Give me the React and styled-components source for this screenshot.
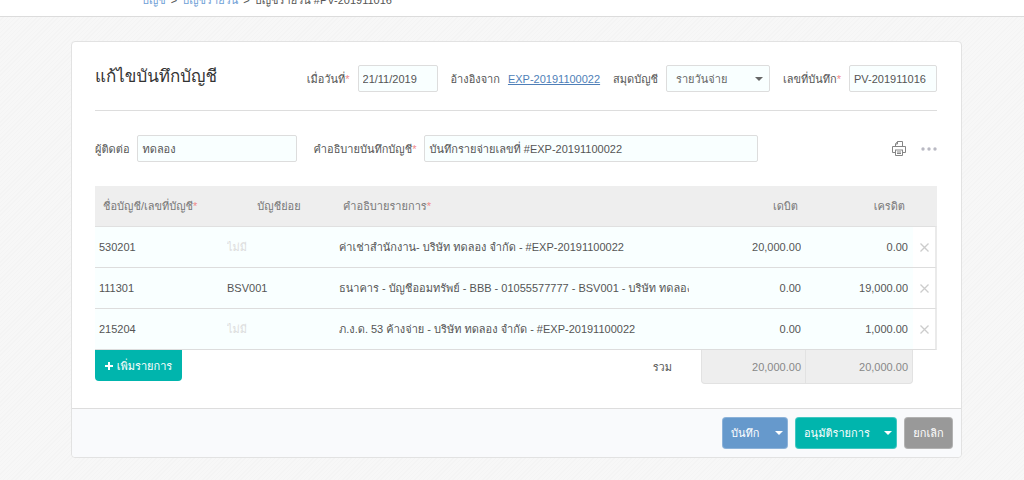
import React from "react";
import styled, { createGlobalStyle } from "styled-components";

const GlobalStyle = createGlobalStyle`
  * { box-sizing: border-box; }
  body {
    margin: 0;
    min-height: 100vh;
    color: #555;
    font: 11px/16px "Liberation Sans", Loma, sans-serif;
    background:
      repeating-linear-gradient(135deg, transparent 0 2px, #f4f4f4 2px 3px),
      #f7f7f7;
  }
  input, button, select { font: inherit; color: inherit; margin: 0; }
`;

const Breadcrumb = styled.nav`
  display: flex;
  align-items: flex-end;
  gap: 5px;
  height: 17px;
  padding: 0 142px 8px;
  overflow: hidden;
  white-space: nowrap;
  background: #fff;
  border-bottom: 1px solid #dcdcdc;
`;

const Crumb = styled.a`
  color: #6fa0d6;
  text-decoration: none;
`;

const Main = styled.main`
  padding: 24px 62px 22px 71px;
`;

const Card = styled.form`
  background: #fff;
  border: 1px solid #e2e2e2;
  border-radius: 4px;
`;

const CardBody = styled.div`
  padding: 23px 24px 24px 23px;
`;

const TitleRow = styled.div`
  display: flex;
  align-items: flex-start;
  justify-content: space-between;
  padding-bottom: 18px;
  border-bottom: 1px solid #ddd;
`;

const Title = styled.h1`
  margin: 0;
  color: #333;
  font-size: 17px;
  line-height: 24px;
  font-weight: 400;
  white-space: nowrap;
`;

const FieldGroup = styled.div`
  display: flex;
  align-items: center;
  gap: ${(p) => p.$gap}px;
`;

const Field = styled.div`
  display: flex;
  align-items: center;
  gap: 8px;
  white-space: nowrap;
`;

const RequiredLabel = styled.label`
  &::after {
    content: "${(p) => (p.$required ? "*" : "")}";
    color: #f08a8a;
  }
`;

const TextBox = styled.input`
  width: ${(p) => p.$width}px;
  height: 27px;
  padding: 0 4px;
  background: #f9ffff;
  border: 1px solid #ddd;
  border-radius: 2px;
`;

const RefLink = styled.a`
  color: #4f7fb8;
`;

const SelectWrap = styled.div`
  display: grid;
  grid-template-columns: 1fr;
  align-items: center;
  color: #666;
  > * { grid-area: 1 / 1; }
`;

const Select = styled.select`
  appearance: none;
  width: 104px;
  height: 27px;
  padding: 0 24px 0 9px;
  background: #f9ffff;
  border: 1px solid #ddd;
  border-radius: 2px;
`;

const Caret = styled.span`
  justify-self: end;
  margin-right: ${(p) => p.$inset || 0}px;
  border: 4px solid transparent;
  border-top-color: currentColor;
  border-bottom: 0;
  pointer-events: none;
`;

const DetailRow = styled.div`
  display: flex;
  align-items: center;
  justify-content: space-between;
  padding: 24px 0;
`;

const Tools = styled.div`
  display: flex;
  align-items: center;
  gap: 15px;
`;

const IconButton = styled.button`
  display: flex;
  padding: 0;
  color: ${(p) => p.$color || "#858585"};
  background: none;
  border: 0;
`;

const Table = styled.table`
  width: 100%;
  table-layout: fixed;
  border-collapse: separate;
  border-spacing: 0;
`;

const HeadCell = styled.th`
  height: 40px;
  padding: 0 8px;
  color: #777;
  background: #eee;
  font-weight: 400;
  text-align: ${(p) => p.$align || "left"};
  white-space: nowrap;
  &::after {
    content: "${(p) => (p.$required ? "*" : "")}";
    color: #f08a8a;
  }
`;

const Cell = styled.td`
  height: 41px;
  padding: 0 5px 0 4px;
  background: #f9ffff;
  border-bottom: 1px solid #ddd;
  tr:first-child > & {
    height: 42px;
    border-top: 1px solid #e0e0e0;
  }
`;

const DetailCell = styled(Cell)`
  padding-right: 12px;
`;

const RemoveCell = styled(Cell)`
  padding: 0 5px 0 7px;
  background: #fff;
  border-right: 2px solid #eaeaea;
`;

const CellInput = styled.input`
  display: block;
  width: 100%;
  height: 24px;
  padding: 0;
  background: transparent;
  border: 0;
  text-align: ${(p) => p.$align || "left"};
  &::placeholder { color: #ddd; opacity: 1; }
`;

const FootCell = styled.td`
  padding: 0;
  padding-right: ${(p) => p.$pad || 0}px;
  text-align: ${(p) => p.$align || "left"};
`;

const SumCell = styled.td`
  height: 34px;
  padding: 0 4px;
  color: #888;
  background: #eee;
  border: solid #e2e2e2;
  border-width: ${(p) => (p.$last ? "0 1px 1px 0" : "0 1px 1px 1px")};
  border-radius: ${(p) => (p.$last ? "0 0 4px 0" : "0 0 0 4px")};
  text-align: right;
`;

const AddButton = styled.button`
  display: flex;
  align-items: center;
  justify-content: center;
  gap: 4px;
  width: 87px;
  height: 31px;
  margin-bottom: 3px;
  padding: 0;
  color: #fff;
  background: #00b5ad;
  border: 0;
  border-radius: 0 0 4px 4px;
  white-space: nowrap;
`;

const Footer = styled.footer`
  display: flex;
  justify-content: flex-end;
  gap: 7px;
  padding: 8px;
  background: #f9fafc;
  border-top: 1px solid #ddd;
  border-radius: 0 0 4px 4px;
`;

const ActionButton = styled.button`
  display: flex;
  align-items: center;
  justify-content: ${(p) => (p.$menu ? "space-between" : "center")};
  width: ${(p) => p.$width}px;
  height: 32px;
  padding: ${(p) => (p.$menu ? "0 4px 0 8px" : "0")};
  color: #fff;
  background: ${(p) => p.$color};
  border: 1px solid rgba(255, 255, 255, 0.25);
  border-radius: 4px;
  white-space: nowrap;
`;

const PrinterIcon = () => (
  <svg width="14" height="16" viewBox="0 0 14 16" fill="none" stroke="currentColor">
    <path d="M3.5 5.5V3l2-2.500h5v5M3.500 3h2V.5M3.500 11.500h-3v-6h13v6h-3" />
    <path d="M3 9h8M3.500 9v5.500h7V9M5 11h4M5 12.500h4" />
  </svg>
);

const DotsIcon = () => (
  <svg width="16" height="4" viewBox="0 0 16 4" fill="currentColor">
    <circle cx="2" cy="2" r="1.700" />
    <circle cx="8" cy="2" r="1.700" />
    <circle cx="14" cy="2" r="1.700" />
  </svg>
);

const CrossIcon = () => (
  <svg width="9" height="9" viewBox="0 0 9 9" fill="none" stroke="currentColor" strokeWidth="1.300">
    <path d="M.5.5l8 8M8.500.5l-8 8" />
  </svg>
);

const PlusIcon = () => (
  <svg width="8" height="8" viewBox="0 0 8 8" fill="none" stroke="currentColor" strokeWidth="2">
    <path d="M4 0v8M0 4h8" />
  </svg>
);

const entries = [
  { account: "530201", sub: "", detail: "ค่าเช่าสำนักงาน- บริษัท ทดลอง จำกัด - #EXP-20191100022", debit: "20,000.00", credit: "0.00" },
  { account: "111301", sub: "BSV001", detail: "ธนาคาร - บัญชีออมทรัพย์ - BBB - 01055577777 - BSV001 - บริษัท ทดลอง จำกัด", debit: "0.00", credit: "19,000.00" },
  { account: "215204", sub: "", detail: "ภ.ง.ด. 53 ค้างจ่าย - บริษัท ทดลอง จำกัด - #EXP-20191100022", debit: "0.00", credit: "1,000.00" },
];

export default function App() {
  return (
    <>
      <GlobalStyle />
      <Breadcrumb>
        <Crumb href="#accounts">บัญชี</Crumb>
        <span>&gt;</span>
        <Crumb href="#journal">บัญชีรายวัน</Crumb>
        <span>&gt;</span>
        <span>บัญชีรายวัน #PV-201911016</span>
      </Breadcrumb>
      <Main>
        <Card onSubmit={(e) => e.preventDefault()}>
          <CardBody>
            <TitleRow>
              <Title>แก้ไขบันทึกบัญชี</Title>
              <FieldGroup $gap={13}>
                <Field>
                  <RequiredLabel htmlFor="date" $required>เมื่อวันที่</RequiredLabel>
                  <TextBox id="date" $width={80} defaultValue="21/11/2019" />
                </Field>
                <Field>
                  <span>อ้างอิงจาก</span>
                  <RefLink href="#EXP-20191100022">EXP-20191100022</RefLink>
                </Field>
                <Field>
                  <RequiredLabel htmlFor="book">สมุดบัญชี</RequiredLabel>
                  <SelectWrap>
                    <Select id="book"><option>รายวันจ่าย</option></Select>
                    <Caret $inset={7} />
                  </SelectWrap>
                </Field>
                <Field>
                  <RequiredLabel htmlFor="number" $required>เลขที่บันทึก</RequiredLabel>
                  <TextBox id="number" $width={88} defaultValue="PV-201911016" />
                </Field>
              </FieldGroup>
            </TitleRow>
            <DetailRow>
              <FieldGroup $gap={16}>
                <Field>
                  <RequiredLabel htmlFor="contact">ผู้ติดต่อ</RequiredLabel>
                  <TextBox id="contact" $width={160} defaultValue="ทดลอง" />
                </Field>
                <Field>
                  <RequiredLabel htmlFor="memo" $required>คำอธิบายบันทึกบัญชี</RequiredLabel>
                  <TextBox id="memo" $width={334} defaultValue="บันทึกรายจ่ายเลขที่ #EXP-20191100022" />
                </Field>
              </FieldGroup>
              <Tools>
                <IconButton type="button" aria-label="พิมพ์"><PrinterIcon /></IconButton>
                <IconButton type="button" aria-label="เพิ่มเติม" $color="#b9b9c3"><DotsIcon /></IconButton>
              </Tools>
            </DetailRow>
            <Table>
              <colgroup>
                <col width="128" />
                <col width="112" />
                <col />
                <col width="105" />
                <col width="107" />
                <col width="24" />
              </colgroup>
              <thead>
                <tr>
                  <HeadCell $required>ชื่อบัญชี/เลขที่บัญชี</HeadCell>
                  <HeadCell $align="center">บัญชีย่อย</HeadCell>
                  <HeadCell $required>คำอธิบายรายการ</HeadCell>
                  <HeadCell $align="right">เดบิต</HeadCell>
                  <HeadCell $align="right">เครดิต</HeadCell>
                  <HeadCell />
                </tr>
              </thead>
              <tbody>
                {entries.map((e) => (
                  <tr key={e.account}>
                    <Cell><CellInput aria-label="เลขที่บัญชี" defaultValue={e.account} /></Cell>
                    <Cell><CellInput aria-label="บัญชีย่อย" placeholder="ไม่มี" defaultValue={e.sub} /></Cell>
                    <DetailCell><CellInput aria-label="คำอธิบายรายการ" defaultValue={e.detail} /></DetailCell>
                    <Cell><CellInput aria-label="เดบิต" $align="right" defaultValue={e.debit} /></Cell>
                    <Cell><CellInput aria-label="เครดิต" $align="right" defaultValue={e.credit} /></Cell>
                    <RemoveCell>
                      <IconButton type="button" aria-label="ลบ" $color="#ccc"><CrossIcon /></IconButton>
                    </RemoveCell>
                  </tr>
                ))}
              </tbody>
              <tfoot>
                <tr>
                  <FootCell colSpan={2}>
                    <AddButton type="button"><PlusIcon />เพิ่มรายการ</AddButton>
                  </FootCell>
                  <FootCell $align="right" $pad={29}>รวม</FootCell>
                  <SumCell>20,000.00</SumCell>
                  <SumCell $last>20,000.00</SumCell>
                  <FootCell />
                </tr>
              </tfoot>
            </Table>
          </CardBody>
          <Footer>
            <ActionButton type="button" $menu $width={66} $color="#6699cc">บันทึก<Caret /></ActionButton>
            <ActionButton type="submit" $menu $width={102} $color="#00b5ad">อนุมัติรายการ<Caret /></ActionButton>
            <ActionButton type="button" $width={49} $color="#999">ยกเลิก</ActionButton>
          </Footer>
        </Card>
      </Main>
    </>
  );
}
